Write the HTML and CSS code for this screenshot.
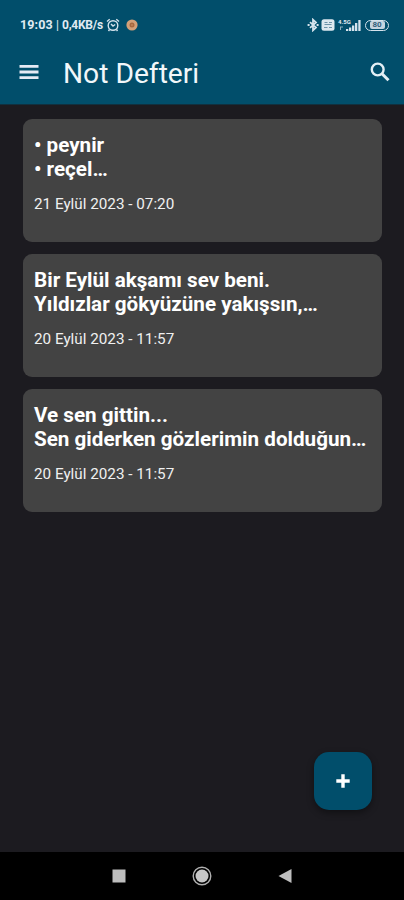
FILE: index.html
```html
<!DOCTYPE html>
<html lang="tr">
<head>
<meta charset="utf-8">
<title>Not Defteri</title>
<link rel="stylesheet" href="styles.css">
</head>
<body>
<div class="screen">
  <header class="header">
    <div class="status">
      <span class="clock">19:03</span>
      <span class="divider">|</span>
      <span class="speed">0,4KB/s</span>
      <svg class="alarm" viewBox="0 0 14 14" width="14" height="14" fill="none" stroke="#d5e3ec" stroke-width="1.4"><circle cx="7" cy="7.5" r="4.8"/><path d="M1 3.5 3.7 1.2M13 3.5 10.3 1.2M5 6l2 2 2.2-1.5M3.5 11.5 2.5 13M10.5 11.5l1 1.5"/></svg>
      <svg class="cookie" viewBox="0 0 12 12" width="12" height="12"><circle cx="6" cy="6" r="5.6" fill="#d3a078"/><circle cx="6" cy="6" r="2.5" fill="#a8683f"/><circle cx="6" cy="6" r="1" fill="#c08358"/></svg>
      <div class="indicators">
        <svg viewBox="0 0 12 14" width="12" height="14" fill="none" stroke="#d5e3ec" stroke-width="1.8"><path d="M3 4.2 9 9.5 6 12.3V1.7L9 4.5 3 9.8"/><path d="M.6 7h2M9.6 7h2"/></svg>
        <svg viewBox="0 0 14 12" width="14" height="12"><rect x=".5" y=".2" width="13" height="11.6" rx="2.5" fill="#dce8ef"/><path d="M3.500 3.500h3M8 3.500h3M3.500 5.500h7M3 8.500h3.500M8 8.500h3" stroke="#6c93a8" stroke-width="1"/></svg>
        <div class="network">
          <span class="net-label">4.5G</span>
          <svg viewBox="0 0 23 13" width="23" height="13" fill="#d5e3ec"><path d="M8 12V10h2.300v2zM11 12V8.500h2.300V12zM14 12V6.500h2.300V12zM17 12V4h2.300v8zM20.300 12V1h2.300v11z"/><path d="M2 7.500h3v1H3V11H2z" opacity=".65"/></svg>
        </div>
        <div class="battery"><span class="level">80</span></div>
      </div>
    </div>
    <div class="toolbar">
      <svg class="menu" viewBox="0 0 20 16" width="20" height="16" fill="#e5eaf5"><path d="M.5 1h19v2.800H.5zM.5 6.600h19v2.800H.5zM.5 12.200h19V15H.5z"/></svg>
      <h1 class="title">Not Defteri</h1>
      <svg class="search" viewBox="0 0 20 20" width="20" height="20" fill="none" stroke="#e4eff5" stroke-width="2.400"><circle cx="7.700" cy="7.500" r="5.900"/><path d="m12 11.800 6.500 6.500" stroke-width="3"/></svg>
    </div>
  </header>
  <main class="notes">
    <article class="note"><p class="text">• peynir<br>• reçel…</p><time class="date">21 Eylül 2023 - 07:20</time></article>
    <article class="note"><p class="text">Bir Eylül akşamı sev beni.<br>Yıldızlar gökyüzüne yakışsın,…</p><time class="date">20 Eylül 2023 - 11:57</time></article>
    <article class="note"><p class="text">Ve sen gittin...<br>Sen giderken gözlerimin dolduğun…</p><time class="date">20 Eylül 2023 - 11:57</time></article>
  </main>
  <button class="add" aria-label="Not ekle"><svg viewBox="0 0 14 14" width="14" height="14"><path d="M7 .3v13.400M.3 7h13.400" stroke="#fff" stroke-width="3.400"/></svg></button>
  <nav class="navbar">
    <svg viewBox="0 0 14 14" width="14" height="14"><rect x=".5" y=".5" width="13" height="13" fill="#bebebe"/></svg>
    <svg viewBox="0 0 20 20" width="20" height="20"><circle cx="10" cy="10" r="8.800" fill="none" stroke="#b0b0b0" stroke-width="1.400"/><circle cx="10" cy="10" r="6.500" fill="#c6c6c6"/></svg>
    <svg viewBox="0 0 14 14" width="14" height="14"><path d="M13.500 0v14L.5 7z" fill="#bebebe"/></svg>
  </nav>
</div>
</body>
</html>
```
FILE: styles.css
```css
* { box-sizing: border-box; }
body { margin: 0; font-family: Roboto, "Liberation Sans", sans-serif; background: #1c1b20; }
.screen { position: relative; width: 404px; height: 900px; display: flex; flex-direction: column; background: #1c1b20; overflow: hidden; }
.header { height: 105px; background: #014e6b; border-bottom: 1px solid #10303f; flex: none; }
.status { display: flex; align-items: center; height: 50px; padding: 0 15px 0 20px; color: #e0ebf2; font-size: 12px; font-weight: 700; line-height: 14px; }
.clock { width: 33px; font-size: 12.500px; letter-spacing: .1px; }
.divider { width: 9px; text-align: center; font-weight: 400; }
.speed { width: 44px; font-size: 12px; letter-spacing: -.25px; }
.alarm { flex: none; }
.cookie { margin-left: 6px; flex: none; }
.indicators { display: flex; align-items: center; margin-left: auto; }
.indicators > svg:nth-child(2) { margin-left: 2px; }
.network { position: relative; width: 23px; height: 13px; margin-left: 3px; }
.network svg { display: block; }
.net-label { position: absolute; left: 0; top: -1px; font-size: 6px; line-height: 7px; }
.battery { width: 24px; height: 11px; margin-left: 4px; border: 1.500px solid #d5e3ec; border-radius: 6px; display: flex; align-items: center; justify-content: center; }
.level { width: 15px; height: 8px; border-radius: 2px; background: #c4d4df; color: #315f79; font-size: 8px; line-height: 8px; text-align: center; }
.toolbar { display: flex; align-items: center; height: 44px; padding: 0 14px 0 19px; }
.menu { margin-top: -1px; }
.title { margin: 4px auto 0 24px; color: #f2f7fa; font-size: 28.200px; line-height: 34px; font-weight: 400; }
.search { margin-top: -1px; }
.notes { flex: 1; display: flex; flex-direction: column; gap: 12.500px; padding: 14.300px 22px 0 23px; }
.note { height: 122.500px; padding: 13.700px 11px 0; border-radius: 9px; background: #434343; }
.text { margin: 0; color: #fff; font-size: 20.650px; line-height: 24px; font-weight: 700; white-space: nowrap; }
.date { display: block; margin-top: 14px; color: #f0f0f0; font-size: 15.250px; line-height: 18px; white-space: nowrap; }
.add { position: absolute; left: 314px; top: 752px; width: 58px; height: 58px; padding: 0; border: 0; border-radius: 15px; background: #014e6b; display: flex; align-items: center; justify-content: center; box-shadow: 0 3px 7px rgba(0,0,0,.4); }
.navbar { display: flex; flex: none; align-items: center; justify-content: space-between; height: 48px; padding: 0 112px; background: #000; }
```
